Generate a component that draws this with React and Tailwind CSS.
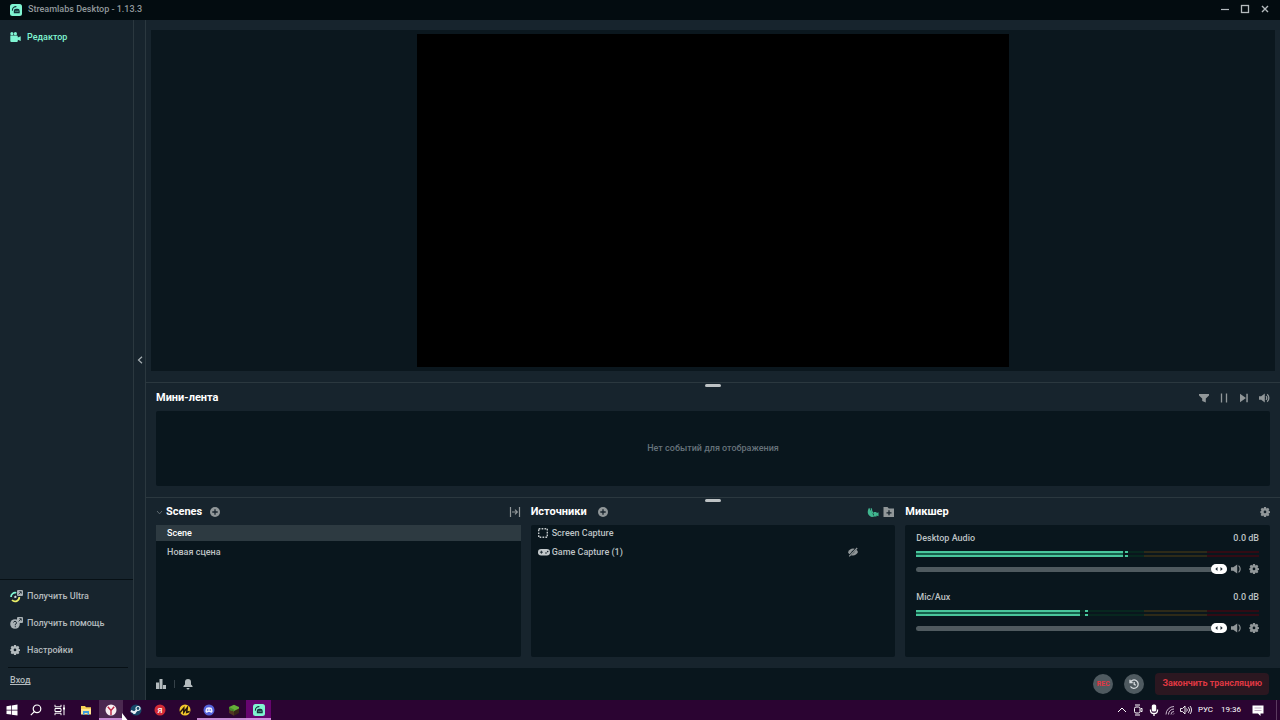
import { useState } from 'react'

const GEAR = "M6.300 0h3.400l.4 2.100 1.100.5 1.800-1.200 2.400 2.400-1.200 1.800.4 1.100 2.100.4v3l-2.100.4-.4 1.100 1.200 1.800-2.400 2.400-1.800-1.200-1.100.5-.4 2.100H6.300l-.4-2.100-1.100-.5L3 15.800.6 13.400l1.200-1.800-.5-1.100L0 10.100v-3l1.300-.4.5-1.100L.6 3.800 3 1.400l1.800 1.200 1.100-.5zM8 6a2.300 2.300 0 1 0 0 4.600A2.300 2.300 0 0 0 8 6z"

const Gear = () => (
    <svg viewBox="0 0 16 17" className="w-[10px] h-[10px]" fill="currentColor"><path fillRule="evenodd" d={GEAR} /></svg>
)

const Plus = () => (
    <svg viewBox="0 0 10 10" className="w-[10px] h-[10px]">
        <circle cx="5" cy="5" r="5" fill="#919799" />
        <path d="M5 2.300v5.400M2.300 5h5.400" stroke="#17242d" strokeWidth="1.300" />
    </svg>
)

// square face used for the app, in the title bar and in the taskbar
const AppLogo = ({ bg, fg }) => (
    <svg viewBox="0 0 12 12" className="w-3 h-3">
        <rect width="12" height="12" rx="2.500" fill={bg} />
        <path d="M2.400 6.200A3.600 3.600 0 0 1 6 2.600" fill="none" stroke={fg} strokeWidth="1.100" strokeLinecap="round" />
        <path d="M3.800 9.300V6.900A2.200 2.200 0 0 1 6 4.700h1.500a2.200 2.200 0 0 1 2.200 2.200v2.400z" fill={fg} />
        <path d="M6 6.700v1.200M7.900 6.700v1.200" stroke={bg} strokeWidth=".8" />
    </svg>
)

const External = () => (
    <g>
        <rect x="7" y="0" width="6" height="6" rx="1" fill="#a9b1b5" />
        <path d="M8.600 4.400 11 2M9.300 1.700h2v2" fill="none" stroke="#17242d" strokeWidth=".8" />
    </g>
)

const Speaker = () => (
    <svg viewBox="0 0 11 10" className="w-[11px] h-[10px]">
        <path d="M0 3.200h2.200L5.800.4v9.200L2.200 6.800H0z" fill="#919799" />
        <path d="M7 3.200a2.500 2.500 0 0 1 0 3.600M8.200 1.200a5.200 5.200 0 0 1 0 7.600" fill="none" stroke="#919799" strokeWidth="1.300" />
    </svg>
)

const MixerSpeaker = () => (
    <svg viewBox="0 0 11 10" className="w-[11px] h-[10px]">
        <path d="M0 3.200h2.200L6.200.4v9.200L2.200 6.800H0z" fill="#919799" />
        <path d="M7.600 1.600a4.500 4.500 0 0 1 0 6.800" fill="none" stroke="#919799" strokeWidth="1.200" />
    </svg>
)

const Handle = () => (
    <div className="flex justify-center border-t border-[#2b383f] pt-px">
        <div className="w-4 h-[3px] rounded-sm bg-[#bdc2c4]"></div>
    </div>
)

const meters = [
    { name: 'Desktop Audio', level: 207, peak: 209 },
    { name: 'Mic/Aux', level: 164, peak: 169 },
]

const MeterLine = ({ level, peak }) => (
    <div className="relative flex h-[2px]">
        <div className="flex-[228] bg-[#07271f]"></div>
        <div className="flex-[63] bg-[#2d2a18]"></div>
        <div className="flex-[52] bg-[#310b14]"></div>
        <div className="absolute inset-y-0 left-0 bg-[#49c69c]" style={{ width: `${level / 3.43}%` }}></div>
        <div className="absolute inset-y-0 w-[3px] bg-[#49c69c]" style={{ left: `${peak / 3.43}%` }}></div>
    </div>
)

const Channel = ({ name, level, peak }) => {
    const [volume, setVolume] = useState(100)

    return (
        <div className="h-[59px] px-[11px]">
            <div className="flex justify-between leading-[14px]">
                <label htmlFor={name}>{name}</label>
                <span>0.0 dB</span>
            </div>
            <div className="relative mt-[6px] flex flex-col gap-[2px]">
                <div className="absolute top-[2px] left-0 h-[2px] bg-[#155f4b]" style={{ width: `${level / 3.43}%` }}></div>
                <MeterLine level={level} peak={peak} />
                <MeterLine level={level} peak={peak} />
            </div>
            <div className="mt-[7px] flex items-center text-[#919799]">
                <div className="relative flex flex-1">
                    <input
                        id={name}
                        type="range"
                        value={volume}
                        onChange={(e) => setVolume(Number(e.target.value))}
                        className="w-full h-[10px] appearance-none bg-transparent [&::-webkit-slider-runnable-track]:h-[5px] [&::-webkit-slider-runnable-track]:rounded-full [&::-webkit-slider-runnable-track]:bg-[#4f5a5f] [&::-webkit-slider-thumb]:appearance-none [&::-webkit-slider-thumb]:w-4 [&::-webkit-slider-thumb]:h-[10px] [&::-webkit-slider-thumb]:-mt-[3px] [&::-webkit-slider-thumb]:rounded-full [&::-webkit-slider-thumb]:bg-white"
                    />
                    <svg viewBox="0 0 16 10" className="absolute top-0 w-4 h-[10px] pointer-events-none" style={{ left: `calc(${volume}% - ${volume * 0.16}px)` }}>
                        <path d="M6.500 3v4L4.300 5zM9.500 3v4l2.200-2z" fill="#17242d" />
                    </svg>
                </div>
                <button aria-label="Mute" className="ml-1"><MixerSpeaker /></button>
                <button aria-label="Source settings" className="ml-[7px]"><Gear /></button>
            </div>
        </div>
    )
}

const Sidebar = () => (
    <nav className="flex w-[133px] shrink-0 flex-col leading-4">
        <a href="#" className="mt-[9px] flex items-center pl-[10px] text-[#80f5d2]">
            <svg viewBox="0 0 11 10" className="mr-[6px] w-[11px] h-[10px]" fill="currentColor">
                <circle cx="1.900" cy="1.700" r="1.600" /><circle cx="5.400" cy="1.700" r="1.600" />
                <path d="M.3 3.600h6.500a1 1 0 0 1 1 1v.8L10.700 4.300v4.600L7.800 7.800V9a1 1 0 0 1-1 1H1.300a1 1 0 0 1-1-1z" />
            </svg>
            Редактор
        </a>
        <div className="mt-auto border-t border-[#071015] pt-2 pb-3 text-[#b4bbbe]">
            <a href="#" className="flex items-center pl-[10px]">
                <svg viewBox="0 0 13 13" className="mr-1 w-[13px] h-[13px]">
                    <path d="M1 7a4.200 4.200 0 0 1 5.300-4.200" fill="none" stroke="#80f5d2" strokeWidth="1.700" />
                    <path d="M9.300 7A4.200 4.200 0 0 1 2 10" fill="none" stroke="#e9ed67" strokeWidth="1.800" />
                    <path d="M4.400 7.500 6.300 6.400" stroke="#d5dcdc" strokeWidth="1.800" /><External />
                </svg>
                Получить Ultra
            </a>
            <a href="#" className="mt-[11px] flex items-center pl-[10px]">
                <svg viewBox="0 0 13 13" className="mr-1 w-[13px] h-[13px]">
                    <circle cx="5" cy="7" r="4.800" fill="#a9b1b5" />
                    <path d="M3.500 5.500a1.500 1.500 0 1 1 1.800 1.800v1M5.300 9.200v1" fill="none" stroke="#17242d" strokeWidth="1" />
                    <External />
                </svg>
                Получить помощь
            </a>
            <a href="#" className="mt-[11px] flex items-center gap-[7px] pl-[10px]">
                <Gear />
                Настройки
            </a>
            <div className="ml-2 mr-[5px] mt-[9px] border-t border-[#071015]"></div>
            <a href="#" className="ml-[10px] mt-1 inline-block underline">Вход</a>
        </div>
    </nav>
)

const Scenes = () => (
    <section className="flex flex-1 flex-col">
        <div className="mt-px flex h-[18px] items-center">
            <svg viewBox="0 0 6 5" className="mr-[3px] w-[7px] h-[5px]"><path d="M.5 1 3 3.800 5.500 1" fill="none" stroke="#667077" strokeWidth=".9" /></svg>
            <h2 className="text-[11px] font-bold text-white">Scenes</h2>
            <button aria-label="Add scene" className="ml-2"><Plus /></button>
            <button aria-label="Scene transitions" className="ml-auto">
                <svg viewBox="0 0 12 12" className="w-3 h-3" fill="none" stroke="#919799" strokeWidth="1.200">
                    <path d="M1.500 1v10M10.500 1v10M3 6h5M6 3.700 8.300 6 6 8.300" />
                </svg>
            </button>
        </div>
        <ul className="mt-1 flex-1 rounded-xs bg-[#09161d]">
            <li className="h-4 bg-[#2d3a41] pl-[11px] leading-4 text-white">Scene</li>
            <li className="mt-[3px] pl-[11px] leading-4">Новая сцена</li>
        </ul>
    </section>
)

const Sources = () => (
    <section className="flex flex-1 flex-col">
        <div className="mt-px flex h-[18px] items-center">
            <h2 className="text-[11px] font-bold text-white">Источники</h2>
            <button aria-label="Add source" className="ml-[11px]"><Plus /></button>
            <button aria-label="Guest camera" className="ml-auto">
                <svg viewBox="0 0 12 11" className="w-3 h-[11px]" fill="#40b68f">
                    <path d="M2.200.8C.2 3 .2 6.700 2.500 8.800c1.600 1.400 3.300 1.400 4.700.7z" />
                    <path d="M4.300 1.200c-.1 2.200.6 4 2.200 5.500" fill="none" stroke="#40b68f" strokeWidth="1.200" />
                    <path d="M6.800 5h2.700v1.200l2-.9v4l-2-.9v1.100H6.800z" />
                </svg>
            </button>
            <button aria-label="Add group" className="ml-1">
                <svg viewBox="0 0 12 10" className="w-3 h-[10px]">
                    <path d="M.5 0h4l1.300 1.500h5.200v8.500H.5z" fill="#919799" />
                    <path d="M6 3.300v5M3.500 5.800h5" stroke="#17242d" strokeWidth="1.300" />
                </svg>
            </button>
        </div>
        <ul className="mt-1 flex-1 rounded-xs bg-[#09161d]">
            <li className="flex items-center pl-[7px] leading-4">
                <svg viewBox="0 0 10 10" className="mr-1 w-[10px] h-[10px]"><rect x=".7" y=".7" width="8.600" height="8.600" fill="none" stroke="#c3c9cb" strokeWidth="1.400" strokeDasharray="1.700 1.200" /></svg>
                Screen Capture
            </li>
            <li className="mt-[3px] flex items-center pl-[7px] leading-4">
                <svg viewBox="0 0 12 7" className="mr-[2px] w-3 h-[7px]">
                    <rect width="12" height="6.500" rx="3.200" fill="#c3c9cb" />
                    <path d="M3.400 1.700v3M1.900 3.200h3" stroke="#17242d" strokeWidth=".9" />
                    <circle cx="8" cy="4" r=".8" fill="#17242d" /><circle cx="9.700" cy="2.600" r=".8" fill="#17242d" />
                </svg>
                Game Capture (1)
                <button aria-label="Show source" className="ml-auto mr-9">
                    <svg viewBox="0 0 12 10" className="w-3 h-[10px]">
                        <path d="M1 5.200C2 3 4 1.600 6 1.600s4 1.200 5 3.400c-1 2.200-3 3.600-5 3.600S2 7.500 1 5.200z" fill="#919799" />
                        <circle cx="6" cy="5" r="1.300" fill="#09161d" />
                        <path d="M1.800 9.300 10 .7" stroke="#09161d" strokeWidth="1.900" />
                        <path d="M2.200 9.300 10.200 1" stroke="#919799" strokeWidth="1.200" />
                    </svg>
                </button>
            </li>
        </ul>
    </section>
)

const Mixer = () => (
    <section className="flex flex-1 flex-col">
        <div className="mt-px flex h-[18px] items-center justify-between">
            <h2 className="text-[11px] font-bold text-white">Микшер</h2>
            <button aria-label="Mixer settings" className="text-[#919799]"><Gear /></button>
        </div>
        <div className="mt-1 flex-1 rounded-xs bg-[#09161d] pt-[6px]">
            {meters.map((m) => <Channel key={m.name} {...m} />)}
        </div>
    </section>
)

const taskbarApps = [
    {
        name: 'Explorer',
        icon: <><path d="M1 2h4l1 1.200h5V10H1z" fill="#f6cf57" /><path d="M1 5h10v5.500H1z" fill="#ffe48f" /><path d="M3 7h6v4H7.500V9h-3v2H3z" fill="#3d9bdc" /></>,
    },
    {
        name: 'Yandex Browser',
        tile: 'bg-[#4b2850] border-b-2 border-[#c58bd0]',
        icon: <><circle cx="6" cy="6" r="5.500" fill="#f7eff2" /><path d="M2.800 2.700 6 6.500l3.200-3.800M6 6.300V11" fill="none" stroke="#bd2745" strokeWidth="1.400" /></>,
    },
    {
        name: 'Steam',
        icon: <><circle cx="6" cy="6" r="5.500" fill="#174869" /><path d="M.8 7 4.500 8.500 8 5" fill="none" stroke="#e8f0f5" strokeWidth="2" /><circle cx="8" cy="4.500" r="2" fill="#174869" stroke="#e8f0f5" strokeWidth="1.200" /><circle cx="4.300" cy="8.500" r="1.500" fill="#e8f0f5" /></>,
    },
    {
        name: 'Yandex',
        icon: <><circle cx="6" cy="6" r="5.500" fill="#d42b36" /><text x="6" y="9" fontSize="8" fontWeight="500" textAnchor="middle" fill="#fff">Я</text></>,
    },
    {
        name: 'Music',
        icon: <><circle cx="6" cy="6" r="5.500" fill="#f2c62c" /><path d="M1 8.500 4.800 4v4.300L8.300 3.600l-.6 4.900 3-1" fill="none" stroke="#21140c" strokeWidth="1.500" /></>,
    },
    {
        name: 'Discord',
        tile: 'border-b-2 border-[#c58bd0]',
        icon: <><circle cx="6" cy="6" r="5.500" fill="#5462d9" /><path d="M3.500 3.700c1.600-.7 3.400-.7 5 0 .8 1.300 1.200 2.700 1 4.200-.7.600-1.300.9-1.800.9L7.200 8H4.800l-.5.8c-.5 0-1.100-.3-1.800-.9-.2-1.500.2-2.900 1-4.200z" fill="#f0f0ff" /><circle cx="4.700" cy="6" r=".8" fill="#5462d9" /><circle cx="7.300" cy="6" r=".8" fill="#5462d9" /></>,
    },
    {
        name: 'Minecraft',
        tile: 'border-b-2 border-[#c58bd0]',
        icon: <><path d="M6 .8 11 3v2.500L6 7.500 1 5.500V3z" fill="#64ad38" /><path d="M1 4.500 6 7v4.700L1 9z" fill="#513623" /><path d="M11 4.500 6 7v4.700L11 9z" fill="#372619" /><path d="m1 3 5 2.500V8L4.500 6.500 3 7 1 5z" fill="#468b2b" /></>,
    },
]

const Taskbar = () => (
    <footer className="relative flex h-5 shrink-0 items-center bg-[#2b0432] text-white">
        <button aria-label="Start" className="flex w-6 justify-center">
            <svg viewBox="0 0 12 12" className="w-3 h-3" fill="#fff"><path d="M.5 2.200 5 1.500v4.200H.5zM5.700 1.400 11.500.5v5.200H5.700zM.5 6.400H5v4.200l-4.500-.7zM5.700 6.400h5.800v5.200l-5.800-.9z" /></svg>
        </button>
        <button aria-label="Search" className="flex w-6 justify-center">
            <svg viewBox="0 0 12 12" className="w-3 h-3" fill="none" stroke="#fff" strokeWidth="1.200"><circle cx="7" cy="4.800" r="3.800" /><path d="M4.300 7.600.8 11.200" /></svg>
        </button>
        <button aria-label="Task view" className="flex w-6 justify-center">
            <svg viewBox="0 0 12 12" className="w-3 h-3" fill="none" stroke="#fff"><path d="M1 .8v2h6v-2M1 11.200v-2h6v2M1 4.500h6v3H1zM10 .8v10.400" /><path d="M9 4.500h2" strokeWidth="2" /></svg>
        </button>
        <div className="ml-[2px] flex h-full w-[197px]">
            {taskbarApps.map((app) => (
                <button key={app.name} aria-label={app.name} className={`flex flex-1 justify-center pt-1 ${app.tile || ''}`}>
                    <svg viewBox="0 0 12 12" className="w-3 h-3">{app.icon}</svg>
                </button>
            ))}
            <button aria-label="Streamlabs" className="flex flex-1 justify-center border-b-2 border-[#d08bdb] bg-[#66056f] pt-1">
                <AppLogo bg="#80f5d2" fg="#14333a" />
            </button>
        </div>
        <div className="ml-auto flex h-full items-center">
            <svg viewBox="0 0 10 10" className="w-[10px] h-[10px]" fill="none" stroke="#fff"><path d="M1 7 5 3l4 4" /></svg>
            <svg viewBox="0 0 10 12" className="ml-[6px] w-[10px] h-3" fill="none" stroke="#fff"><rect x="1.500" y="3" width="5.500" height="6" rx="1.500" /><path d="M2 1h5M2 11h5M7.500 5 9 4.300v3.400L7.500 7" /></svg>
            <svg viewBox="0 0 10 12" className="ml-[6px] w-[10px] h-3"><rect x="2.800" y=".5" width="4.400" height="7" rx="1.500" fill="#fff" /><path d="M1.500 5.500v1c0 4 7 4 7 0v-1M5 9v3" fill="none" stroke="#fff" strokeWidth="1.300" /></svg>
            <svg viewBox="0 0 10 10" className="ml-[6px] w-[10px] h-[10px]" fill="none" stroke="#d8c9da" strokeWidth=".9"><path d="M1 9.500a8 8 0 0 1 8-8M3.500 9.500A5.500 5.500 0 0 1 9 4M6 9.500a3 3 0 0 1 3-3M8 9.500l1-1" /></svg>
            <svg viewBox="0 0 12 10" className="ml-[5px] w-3 h-[10px]" fill="none" stroke="#fff" strokeWidth=".9"><path d="M.5 3.500h2L5 1v8L2.500 6.500h-2zM6.500 3.500a2 2 0 0 1 0 3M8.300 2.200a4 4 0 0 1 0 5.600M10 1a6 6 0 0 1 0 8" /></svg>
            <span className="ml-[6px] text-[8px] font-normal">РУС</span>
            <span className="ml-2 text-[8px] font-normal">19:36</span>
            <svg viewBox="0 0 12 11" className="ml-[11px] w-3 h-[11px]"><path d="M.5.500h11v8H8.500V11L6 8.500H.500z" fill="#fff" /><path d="M2.500 3h7M2.500 5.500h7" stroke="#a58aaa" strokeWidth=".7" /></svg>
            <div className="ml-3 mr-[3px] h-full w-px bg-[#5b3a60]"></div>
        </div>
        {/* mouse pointer */}
        <svg viewBox="0 0 6 7" className="absolute left-[122px] bottom-0 w-[6px] h-[7px]"><path d="M0 0v7h5.500z" fill="#fff" /></svg>
    </footer>
)

export default function App() {
    return (
        <div className="flex h-screen flex-col overflow-hidden bg-[#17242d] font-['Roboto',sans-serif] text-[9px] font-medium text-[#bdc2c4]">
            <header className="flex h-5 shrink-0 items-center bg-[#030c10] px-[10px] text-[#91989b]">
                <AppLogo bg="#80f5d2" fg="#14333a" />
                <h1 className="ml-[6px] font-medium">Streamlabs Desktop - 1.13.3</h1>
                <div className="ml-auto flex gap-[10px] pb-[2px] text-[#b4babd]">
                    <button aria-label="Minimize"><svg viewBox="0 0 10 10" className="w-[10px] h-[10px]"><path d="M1 5.500h8" stroke="currentColor" strokeWidth="1.200" /></svg></button>
                    <button aria-label="Maximize"><svg viewBox="0 0 10 10" className="w-[10px] h-[10px]"><rect x="1.500" y="1.500" width="7" height="7" fill="none" stroke="currentColor" strokeWidth="1.300" /></svg></button>
                    <button aria-label="Close"><svg viewBox="0 0 10 10" className="w-[10px] h-[10px]"><path d="m2 2 6 6M8 2 2 8" stroke="currentColor" strokeWidth="1.400" /></svg></button>
                </div>
            </header>

            <div className="flex min-h-0 flex-1">
                <Sidebar />
                <button aria-label="Collapse menu" className="flex w-[13px] shrink-0 items-center justify-center border-x border-[#2b383f]">
                    <svg viewBox="0 0 6 8" className="w-[6px] h-2"><path d="M5 .8 1.500 4 5 7.200" fill="none" stroke="#a9b1b5" strokeWidth="1.200" /></svg>
                </button>

                <main className="flex min-w-0 flex-1 flex-col">
                    <div className="mx-[5px] mt-[10px] mb-[11px] flex min-h-0 flex-1 justify-center bg-[#0b171e] py-1">
                        <div className="aspect-video h-full bg-black"></div>
                    </div>

                    <Handle />
                    <section className="px-[10px]">
                        <div className="mt-[2px] flex h-[18px] items-center">
                            <h2 className="text-[11px] font-bold text-white">Мини-лента</h2>
                            <div className="ml-auto flex gap-[10px]">
                                <button aria-label="Filter"><svg viewBox="0 0 10 10" className="w-[10px] h-[10px]" fill="#919799"><path d="M0 1h10v1.500L6.800 5.500v4L3.200 8V5.500L0 2.500z" /></svg></button>
                                <button aria-label="Pause"><svg viewBox="0 0 10 10" className="w-[10px] h-[10px]" stroke="#919799" strokeWidth="1.300"><path d="M2.500.5v9M7.500.5v9" /></svg></button>
                                <button aria-label="Skip"><svg viewBox="0 0 10 10" className="w-[10px] h-[10px]" fill="#919799"><path d="M1 .8 7 5 1 9.200zM7.300.8h1.500v8.400H7.300z" /></svg></button>
                                <button aria-label="Mute alerts"><Speaker /></button>
                            </div>
                        </div>
                        <div className="mt-1 flex h-[75px] items-center justify-center rounded-xs bg-[#09161d] text-[#66727a]">Нет событий для отображения</div>
                    </section>

                    <div className="mt-[11px]"><Handle /></div>
                    <div className="flex h-[155px] gap-[10px] px-[10px]">
                        <Scenes />
                        <Sources />
                        <Mixer />
                    </div>

                    <div className="mt-[11px] flex h-8 items-center bg-[#09161d] pl-[10px] pr-[11px]">
                        <button aria-label="Statistics"><svg viewBox="0 0 10 10" className="w-[10px] h-[10px]" fill="#b4bbbe"><path d="M0 3.500h3V10H0zM3.500 0h3v10h-3zM7 6h3v4H7z" /></svg></button>
                        <div className="mx-2 h-2 w-px bg-[#354148]"></div>
                        <button aria-label="Notifications">
                            <svg viewBox="0 0 10 11" className="w-[10px] h-[11px]" fill="#b4bbbe"><path d="M5 0a3 3 0 0 1 3 3v2.500L9.500 7v1h-9V7L2 5.500V3a3 3 0 0 1 3-3zM3.500 9h3a1.500 1.500 0 0 1-3 0z" /></svg>
                        </button>
                        <button className="ml-auto h-5 w-5 rounded-full bg-[#4f5a60] text-[7px] font-bold text-[#e33743]">REC</button>
                        <button aria-label="Replay buffer" className="ml-[11px] flex h-5 w-5 items-center justify-center rounded-full bg-[#4f5a60]">
                            <svg viewBox="0 0 12 12" className="w-3 h-3" fill="none" stroke="#d5dadd" strokeWidth="1.300"><path d="M2 1.800v2.700h2.700M2.200 4.300A4.200 4.200 0 1 1 2.500 8.500M6.200 4v2.300l1.600 1" /></svg>
                        </button>
                        <button className="ml-[11px] h-[22px] rounded-sm bg-[#2b1720] px-[7px] font-bold text-[#df3843]">Закончить трансляцию</button>
                    </div>
                </main>
            </div>
            <Taskbar />
        </div>
    )
}
